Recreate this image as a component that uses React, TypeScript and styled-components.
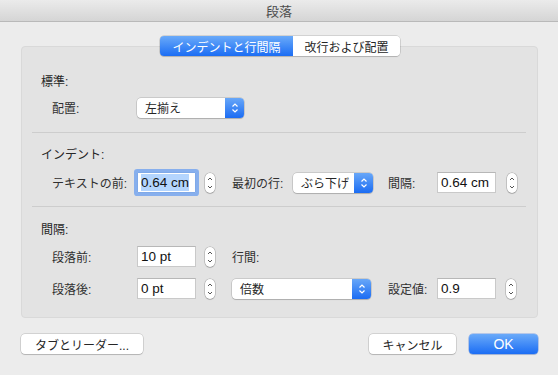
import styled, { createGlobalStyle } from 'styled-components';

const GlobalStyle = createGlobalStyle`
  html, body {
    margin: 0;
    padding: 0;
    background: #ececec;
  }
  body {
    font-family: "Liberation Sans", "Noto Sans CJK JP", sans-serif;
    color: #262626;
  }
`;

const Window = styled.div`
  width: 558px;
  height: 375px;
  background: #ececec;
  display: flex;
  flex-direction: column;
  overflow: hidden;
`;

const TitleBar = styled.div`
  height: 21px;
  border-bottom: 1px solid #b9b9b9;
  background: linear-gradient(#ebebeb, #d5d5d5);
  display: flex;
  align-items: center;
  justify-content: center;
  font-size: 13px;
  color: #4d4d4d;
`;

const Body = styled.div`
  padding: 14px 20px 0 21px;
  display: flex;
  flex-direction: column;
`;

const TabBar = styled.div`
  position: relative;
  z-index: 1;
  align-self: center;
  display: flex;
  height: 20px;
  border-radius: 4px;
  box-shadow: 0 0 0 0.5px rgba(0, 0, 0, 0.22), 0 1px 1px rgba(0, 0, 0, 0.12);
  overflow: hidden;
  margin-left: 1px;
`;

const Tab = styled.div<{ $active?: boolean }>`
  display: flex;
  align-items: center;
  justify-content: center;
  font-size: 12px;
  padding: 0 ${p => (p.$active ? '12px' : '9px')};
  width: ${p => (p.$active ? '133px' : '107px')};
  box-sizing: border-box;
  color: ${p => (p.$active ? '#fff' : '#262626')};
  background: ${p => (p.$active ? 'linear-gradient(#6aaaf9, #1b6df4)' : '#fff')};
`;

const Panel = styled.div`
  margin-top: -10px;
  background: #e3e3e3;
  border: 1px solid #d9d9d9;
  border-radius: 4px;
  height: 272px;
  box-sizing: border-box;
  padding: 27px 11px 0 10px;
`;

const Section = styled.div<{ $top?: number }>`
  padding-top: ${p => p.$top ?? 0}px;
`;

const Header = styled.div<{ $gap: number }>`
  font-size: 12px;
  line-height: 16px;
  padding-left: 9px;
  margin-bottom: ${p => p.$gap}px;
`;

const Separator = styled.div<{ $top: number }>`
  height: 1px;
  background: #cdcdcd;
  margin-top: ${p => p.$top}px;
`;

const Grid = styled.div<{ $rowGap?: number }>`
  display: grid;
  grid-template-columns: 85px 59px 36px 61px 80px 15px 49px 59px 20px;
  grid-auto-rows: 21px;
  row-gap: ${p => p.$rowGap ?? 0}px;
  align-items: center;
  padding-left: 20px;
`;

const Label = styled.div<{ $col?: number }>`
  font-size: 12px;
  grid-column: ${p => p.$col ?? 1};
  color: #303030;
  white-space: nowrap;
`;

const Field = styled.div<{ $col?: number; $focused?: boolean }>`
  grid-column: ${p => p.$col ?? 2};
  height: 21px;
  box-sizing: border-box;
  background: #fff;
  border: 1px solid #c9c9c9;
  border-top-color: #b7b7b7;
  font-size: 13.5px;
  color: #111;
  display: flex;
  align-items: center;
  padding-left: 3px;
  ${p =>
    p.$focused &&
    `
    border-color: #7fa9e8;
    box-shadow: 0 0 0 3px rgba(104, 158, 240, 0.75);
    border-radius: 1px;
  `}
`;

const Selected = styled.span`
  background: #b4d5fe;
  padding: 1px 0;
`;

const StepperBox = styled.div<{ $col?: number; $offset?: number }>`
  grid-column: ${p => p.$col ?? 3};
  margin-left: ${p => p.$offset ?? 9}px;
  width: 10px;
  height: 20px;
  background: #fff;
  border-radius: 5px;
  box-shadow: 0 0 0 0.5px rgba(0, 0, 0, 0.28), 0 1px 1px rgba(0, 0, 0, 0.12);
  display: flex;
  align-items: center;
  justify-content: center;
`;

const Popup = styled.div<{ $col: string; $width: number }>`
  grid-column: ${p => p.$col};
  justify-self: start;
  width: ${p => p.$width}px;
  height: 20px;
  display: flex;
  background: #fff;
  border-radius: 4px;
  box-shadow: 0 0 0 0.5px rgba(0, 0, 0, 0.22), 0 1px 1px rgba(0, 0, 0, 0.14);
  overflow: hidden;
`;

const PopupText = styled.div`
  flex: 1;
  font-size: 12px;
  padding-left: 8px;
  display: flex;
  align-items: center;
  color: #262626;
`;

const PopupArrow = styled.div`
  width: 19px;
  background: linear-gradient(#68a7f8, #1b6cf3);
  display: flex;
  align-items: center;
  justify-content: center;
`;

const Footer = styled.div`
  display: flex;
  align-items: center;
  margin-top: 16px;
  gap: 13px;
`;

const Button = styled.div<{ $width: number; $primary?: boolean }>`
  width: ${p => p.$width}px;
  height: 20px;
  border-radius: 4px;
  display: flex;
  align-items: center;
  justify-content: center;
  font-size: 12px;
  color: ${p => (p.$primary ? '#fff' : '#262626')};
  background: ${p => (p.$primary ? 'linear-gradient(#6aaaf9, #1b6df4)' : '#fff')};
  box-shadow: ${p =>
    p.$primary
      ? '0 0 0 0.5px rgba(20, 90, 220, 0.5), 0 1px 1px rgba(0, 0, 0, 0.12)'
      : '0 0 0 0.5px rgba(0, 0, 0, 0.22), 0 1px 1px rgba(0, 0, 0, 0.14)'};
  font-size: ${p => (p.$primary ? '14px' : '12px')};
`;

const Spacer = styled.div`
  flex: 1;
`;

function Chevrons({ color }: { color: string }) {
  return (
    <svg width="8" height="12" viewBox="0 0 8 12">
      <path d="M1.5 4.5 L4 2 L6.5 4.5" fill="none" stroke={color} strokeWidth="1.2" />
      <path d="M1.5 7.5 L4 10 L6.5 7.5" fill="none" stroke={color} strokeWidth="1.2" />
    </svg>
  );
}

function Stepper({ col, offset }: { col?: number; offset?: number }) {
  return (
    <StepperBox $col={col} $offset={offset}>
      <svg width="6" height="14" viewBox="0 0 6 14">
        <path d="M1 4 L3 2 L5 4" fill="none" stroke="#555" strokeWidth="1" />
        <path d="M1 10 L3 12 L5 10" fill="none" stroke="#555" strokeWidth="1" />
      </svg>
    </StepperBox>
  );
}

function PopupButton({ col, width, value }: { col: string; width: number; value: string }) {
  return (
    <Popup $col={col} $width={width}>
      <PopupText>{value}</PopupText>
      <PopupArrow>
        <Chevrons color="#fff" />
      </PopupArrow>
    </Popup>
  );
}

export default function App() {
  return (
    <Window>
      <GlobalStyle />
      <TitleBar>段落</TitleBar>
      <Body>
        <TabBar>
          <Tab $active>インデントと行間隔</Tab>
          <Tab>改行および配置</Tab>
        </TabBar>
        <Panel>
          <Section>
            <Header $gap={7}>標準:</Header>
            <Grid>
              <Label>配置:</Label>
              <PopupButton col="2 / 6" width={107} value="左揃え" />
            </Grid>
            <Separator $top={14} />
          </Section>

          <Section $top={14}>
            <Header $gap={9}>インデント:</Header>
            <Grid>
              <Label>テキストの前:</Label>
              <Field $focused>
                <Selected>0.64 cm</Selected>
              </Field>
              <Stepper />
              <Label $col={4}>最初の行:</Label>
              <PopupButton col="5" width={80} value="ぶら下げ" />
              <Label $col={7}>間隔:</Label>
              <Field $col={8}>0.64 cm</Field>
              <Stepper col={9} offset={11} />
            </Grid>
            <Separator $top={13} />
          </Section>

          <Section $top={15}>
            <Header $gap={8}>間隔:</Header>
            <Grid $rowGap={11}>
              <Label>段落前:</Label>
              <Field>10 pt</Field>
              <Stepper />
              <Label $col={4}>行間:</Label>

              <Label>段落後:</Label>
              <Field>0 pt</Field>
              <Stepper />
              <PopupButton col="4 / 6" width={139} value="倍数" />
              <Label $col={7}>設定値:</Label>
              <Field $col={8}>0.9</Field>
              <Stepper col={9} offset={10} />
            </Grid>
          </Section>
        </Panel>
        <Footer>
          <Button $width={122}>タブとリーダー...</Button>
          <Spacer />
          <Button $width={87}>キャンセル</Button>
          <Button $width={69} $primary>
            OK
          </Button>
        </Footer>
      </Body>
    </Window>
  );
}
